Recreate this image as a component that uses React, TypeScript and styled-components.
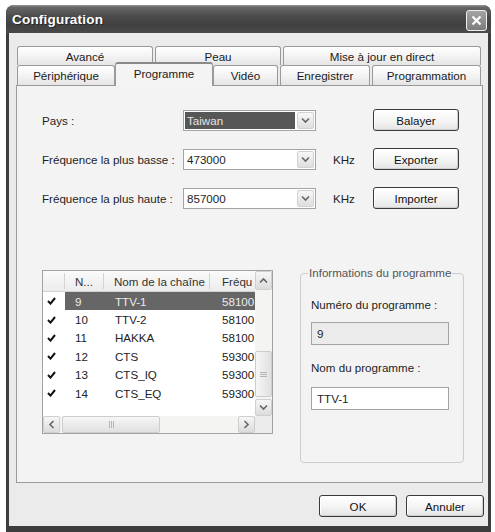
import React from "react";
import styled, { createGlobalStyle, css } from "styled-components";

const GlobalStyle = createGlobalStyle`
  html, body { margin: 0; padding: 0; background: #ffffff; overflow: hidden; }
  body { font-family: "Liberation Sans", Arial, sans-serif; font-size: 11.6px; color: #1e1e1e; }
  * { box-sizing: border-box; }
`;

const Window = styled.div`
  margin: 5px 0 0 6px;
  width: 485px;
  height: 540px;
  background: #3d3d3d;
  border-radius: 8px 8px 0 0;
  overflow: hidden;
  display: flex;
  flex-direction: column;
`;

const TitleBar = styled.div`
  height: 28px;
  flex: none;
  display: flex;
  align-items: center;
  justify-content: space-between;
  padding: 0 4px 0 6px;
  background: linear-gradient(180deg, #9a9a9a 0%, #666 8%, #4c4c4c 40%, #414141 70%, #4a4a4a 100%);
`;

const Title = styled.span`
  color: #ffffff;
  font-weight: bold;
  font-size: 13.5px;
  letter-spacing: 0.2px;
  text-shadow: 1px 1px 0 #262626;
`;

const CloseButton = styled.div`
  width: 21px;
  height: 21px;
  margin-top: 3px;
  border: 1px solid #eeeeee;
  border-radius: 3px;
  background: linear-gradient(180deg, #a4a4a4, #7c7c7c);
  display: flex;
  align-items: center;
  justify-content: center;
`;

const Body = styled.div`
  margin: 0 3px;
  height: 493px;
  flex: none;
  background: #ebebeb;
  padding: 13px 5px 0 7px;
  display: flex;
  flex-direction: column;
`;

const TabStrip = styled.div`
  display: flex;
  flex-direction: column;
  padding-left: 1px;
  position: relative;
  z-index: 2;
`;

const TabRow = styled.div<{ $h: number }>`
  display: flex;
  gap: 2px;
  height: ${(p) => p.$h}px;
  align-items: flex-end;
`;

const Tab = styled.div<{ $w: number; $active?: boolean }>`
  width: ${(p) => p.$w}px;
  height: 100%;
  flex: none;
  border: 1px solid #9a9a9a;
  border-bottom: none;
  border-radius: 3px 3px 0 0;
  background: linear-gradient(180deg, #ffffff 0%, #f1f1f1 60%, #e4e4e4 100%);
  display: flex;
  align-items: center;
  justify-content: center;
  color: #1a1a1a;
  white-space: nowrap;
  ${(p) =>
    p.$active &&
    css`
      width: ${p.$w + 4}px;
      margin: 0 -2px -1px;
      height: calc(100% + 4px);
      background: #f4f4f4;
      border-top: 2px solid #8a8a8a;
      padding-bottom: 3px;
    `}
`;

const Panel = styled.div`
  position: relative;
  z-index: 1;
  height: 398px;
  border: 1px solid #9a9a9a;
  background: #f3f3f3;
  padding: 23px 0 0 25px;
`;

const FormGrid = styled.div`
  display: grid;
  grid-template-columns: 141px 133px 57px 86px;
  grid-auto-rows: 22px;
  row-gap: 17px;
  align-items: center;
`;

const Label = styled.span`
  white-space: nowrap;
`;

const Unit = styled.span`
  padding-left: 17px;
`;

const Combo = styled.div`
  height: 21px;
  border: 1px solid #a4a4a4;
  background: #ffffff;
  display: flex;
  padding: 1px;
`;

const ComboValue = styled.div<{ $selected?: boolean }>`
  flex: 1;
  display: flex;
  align-items: center;
  padding-left: 2px;
  margin-right: 2px;
  ${(p) =>
    p.$selected &&
    css`
      background: #575757;
      color: #e4e4e4;
    `}
`;

const ComboArrow = styled.div`
  width: 17px;
  border: 1px solid #d2d2d2;
  border-radius: 2px;
  background: linear-gradient(180deg, #f7f7f7, #dedede);
  display: flex;
  align-items: center;
  justify-content: center;
`;

const PushButton = styled.div<{ $w: number }>`
  width: ${(p) => p.$w}px;
  height: 22px;
  border: 1px solid #3a3a3a;
  border-radius: 3px;
  background: linear-gradient(180deg, #ffffff 0%, #f4f4f4 55%, #e4e4e4 100%);
  box-shadow: inset -1px -1px 0 #cfcfcf, inset 1px 1px 0 #ffffff;
  display: flex;
  align-items: center;
  justify-content: center;
  color: #111;
`;

const Lower = styled.div`
  display: flex;
  align-items: flex-start;
  margin-top: 61px;
  gap: 27px;
`;

const ListView = styled.div`
  width: 231px;
  height: 164px;
  border: 1px solid #a2a2a2;
  background: #ffffff;
  display: grid;
  grid-template-columns: 212px 17px;
  grid-template-rows: 145px 17px;
`;

const ListArea = styled.div`
  overflow: hidden;
  display: flex;
  flex-direction: column;
`;

const cols = "22px 39px 106px 1fr";

const HeaderRow = styled.div`
  display: grid;
  grid-template-columns: ${cols};
  height: 21px;
  flex: none;
  background: linear-gradient(180deg, #fafafa, #ececec);
  border-bottom: 1px solid #d2d2d2;
`;

const HeaderCell = styled.div<{ $last?: boolean }>`
  display: flex;
  align-items: center;
  padding-left: ${(p) => (p.$last ? 12 : 10)}px;
  white-space: nowrap;
  overflow: hidden;
  color: #333;
  border-right: ${(p) => (p.$last ? "none" : "1px solid #d4d4d4")};
  margin: 2px 0;
`;

const Row = styled.div`
  display: grid;
  grid-template-columns: ${cols};
  height: 18.4px;
  flex: none;
`;

const Cell = styled.div<{ $sel?: boolean; $pad: number }>`
  display: flex;
  align-items: center;
  padding-left: ${(p) => p.$pad}px;
  white-space: nowrap;
  overflow: hidden;
  color: #222;
  ${(p) =>
    p.$sel &&
    css`
      background: #666666;
      color: #ececec;
    `}
`;

const VScroll = styled.div`
  display: flex;
  flex-direction: column;
  background: #f4f4f2;
`;

const HScroll = styled.div`
  display: flex;
  background: #f4f4f2;
`;

const Corner = styled.div`
  background: #ebebeb;
`;

const ScrollBtn = styled.div<{ $h?: number }>`
  flex: none;
  width: 17px;
  height: ${(p) => p.$h ?? 17}px;
  border: 1px solid #cfcfcf;
  border-radius: 2px;
  background: linear-gradient(180deg, #f6f6f6, #dcdcdc);
  display: flex;
  align-items: center;
  justify-content: center;
`;

const Track = styled.div<{ $vertical?: boolean }>`
  flex: 1;
  display: flex;
  flex-direction: ${(p) => (p.$vertical ? "column" : "row")};
`;

const Thumb = styled.div<{ $vertical?: boolean }>`
  border: 1px solid #cdcdcd;
  border-radius: 2px;
  background: linear-gradient(${(p) => (p.$vertical ? "90deg" : "180deg")}, #f6f6f6, #e0e0e0);
  display: flex;
  align-items: center;
  justify-content: center;
  ${(p) =>
    p.$vertical
      ? css`
          margin-top: 61px;
          height: 46px;
        `
      : css`
          margin-left: 2px;
          width: 98px;
        `}
`;

const GroupBox = styled.fieldset`
  margin: -4px 0 0;
  width: 164px;
  height: 197px;
  border: 1px solid #cdcdcd;
  border-radius: 4px;
  padding: 0 4px 0 10px;
  min-width: 0;
  display: flex;
  flex-direction: column;
`;

const Legend = styled.legend`
  padding: 0 1px;
  margin-left: -3px;
  color: #555;
  line-height: 14px;
  white-space: nowrap;
`;

const FieldLabel = styled.div<{ $mt: number }>`
  margin-top: ${(p) => p.$mt}px;
  line-height: 14px;
  white-space: nowrap;
`;

const TextBox = styled.div<{ $disabled?: boolean; $mt: number }>`
  margin-top: ${(p) => p.$mt}px;
  height: 23px;
  width: 138px;
  border: 1px solid #a4a4a4;
  background: ${(p) => (p.$disabled ? "#ebebeb" : "#ffffff")};
  padding-left: 5px;
  display: flex;
  align-items: center;
`;

const Footer = styled.div`
  margin-top: 12px;
  margin-right: -1px;
  display: flex;
  justify-content: flex-end;
  gap: 9px;
`;

const Chevron = ({ dir }: { dir: "up" | "down" | "left" | "right" }) => {
  const rot = { down: 0, up: 180, left: 90, right: -90 }[dir];
  return (
    <svg width="9" height="7" viewBox="0 0 9 7" style={{ transform: `rotate(${rot}deg)` }}>
      <path d="M1 1.5 L4.5 5 L8 1.5" fill="none" stroke="#666" strokeWidth="1.6" />
    </svg>
  );
};

const Check = () => (
  <svg width="9" height="8" viewBox="0 0 9 8">
    <path d="M1 4 L3.5 6.6 L8 1" fill="none" stroke="#111" strokeWidth="2" />
  </svg>
);

const Grip = ({ vertical }: { vertical?: boolean }) =>
  vertical ? (
    <svg width="7" height="7" viewBox="0 0 7 7">
      <path d="M0 1.5h7M0 3.5h7M0 5.5h7" stroke="#b5b5b5" strokeWidth="1" />
    </svg>
  ) : (
    <svg width="7" height="7" viewBox="0 0 7 7">
      <path d="M1.5 0v7M3.5 0v7M5.5 0v7" stroke="#b5b5b5" strokeWidth="1" />
    </svg>
  );

const channels = [
  { n: "9", name: "TTV-1", f: "58100", sel: true },
  { n: "10", name: "TTV-2", f: "58100" },
  { n: "11", name: "HAKKA", f: "58100" },
  { n: "12", name: "CTS", f: "59300" },
  { n: "13", name: "CTS_IQ", f: "59300" },
  { n: "14", name: "CTS_EQ", f: "59300" },
];

export default function App() {
  return (
    <>
      <GlobalStyle />
      <Window>
        <TitleBar>
          <Title>Configuration</Title>
          <CloseButton>
            <svg width="11" height="11" viewBox="0 0 11 11">
              <path d="M1.5 1.5 L9.5 9.5 M9.5 1.5 L1.5 9.5" stroke="#fff" strokeWidth="2.2" />
            </svg>
          </CloseButton>
        </TitleBar>
        <Body>
          <TabStrip>
            <TabRow $h={19}>
              <Tab $w={136}>Avancé</Tab>
              <Tab $w={126}>Peau</Tab>
              <Tab $w={198}>Mise à jour en direct</Tab>
            </TabRow>
            <TabRow $h={20}>
              <Tab $w={98}>Périphérique</Tab>
              <Tab $w={94} $active>
                Programme
              </Tab>
              <Tab $w={65}>Vidéo</Tab>
              <Tab $w={90}>Enregistrer</Tab>
              <Tab $w={109}>Programmation</Tab>
            </TabRow>
          </TabStrip>
          <Panel>
            <FormGrid>
              <Label>Pays :</Label>
              <Combo>
                <ComboValue $selected>Taiwan</ComboValue>
                <ComboArrow>
                  <Chevron dir="down" />
                </ComboArrow>
              </Combo>
              <span />
              <PushButton $w={86}>Balayer</PushButton>

              <Label>Fréquence la plus basse :</Label>
              <Combo>
                <ComboValue>473000</ComboValue>
                <ComboArrow>
                  <Chevron dir="down" />
                </ComboArrow>
              </Combo>
              <Unit>KHz</Unit>
              <PushButton $w={86}>Exporter</PushButton>

              <Label>Fréquence la plus haute :</Label>
              <Combo>
                <ComboValue>857000</ComboValue>
                <ComboArrow>
                  <Chevron dir="down" />
                </ComboArrow>
              </Combo>
              <Unit>KHz</Unit>
              <PushButton $w={86}>Importer</PushButton>
            </FormGrid>

            <Lower>
              <ListView>
                <ListArea>
                  <HeaderRow>
                    <HeaderCell />
                    <HeaderCell>N...</HeaderCell>
                    <HeaderCell>Nom de la chaîne</HeaderCell>
                    <HeaderCell $last>Fréqu</HeaderCell>
                  </HeaderRow>
                  {channels.map((c) => (
                    <Row key={c.n}>
                      <Cell $pad={4}>
                        <Check />
                      </Cell>
                      <Cell $pad={10} $sel={c.sel}>
                        {c.n}
                      </Cell>
                      <Cell $pad={11} $sel={c.sel}>
                        {c.name}
                      </Cell>
                      <Cell $pad={12} $sel={c.sel}>
                        {c.f}
                      </Cell>
                    </Row>
                  ))}
                </ListArea>
                <VScroll>
                  <ScrollBtn $h={19}>
                    <Chevron dir="up" />
                  </ScrollBtn>
                  <Track $vertical>
                    <Thumb $vertical>
                      <Grip vertical />
                    </Thumb>
                  </Track>
                  <ScrollBtn>
                    <Chevron dir="down" />
                  </ScrollBtn>
                </VScroll>
                <HScroll>
                  <ScrollBtn>
                    <Chevron dir="left" />
                  </ScrollBtn>
                  <Track>
                    <Thumb>
                      <Grip />
                    </Thumb>
                  </Track>
                  <ScrollBtn>
                    <Chevron dir="right" />
                  </ScrollBtn>
                </HScroll>
                <Corner />
              </ListView>

              <GroupBox>
                <Legend>Informations du programme</Legend>
                <FieldLabel $mt={18}>Numéro du programme :</FieldLabel>
                <TextBox $disabled $mt={10}>
                  9
                </TextBox>
                <FieldLabel $mt={16}>Nom du programme :</FieldLabel>
                <TextBox $mt={12}>TTV-1</TextBox>
              </GroupBox>
            </Lower>
          </Panel>
          <Footer>
            <PushButton $w={78}>OK</PushButton>
            <PushButton $w={78}>Annuler</PushButton>
          </Footer>
        </Body>
      </Window>
    </>
  );
}
